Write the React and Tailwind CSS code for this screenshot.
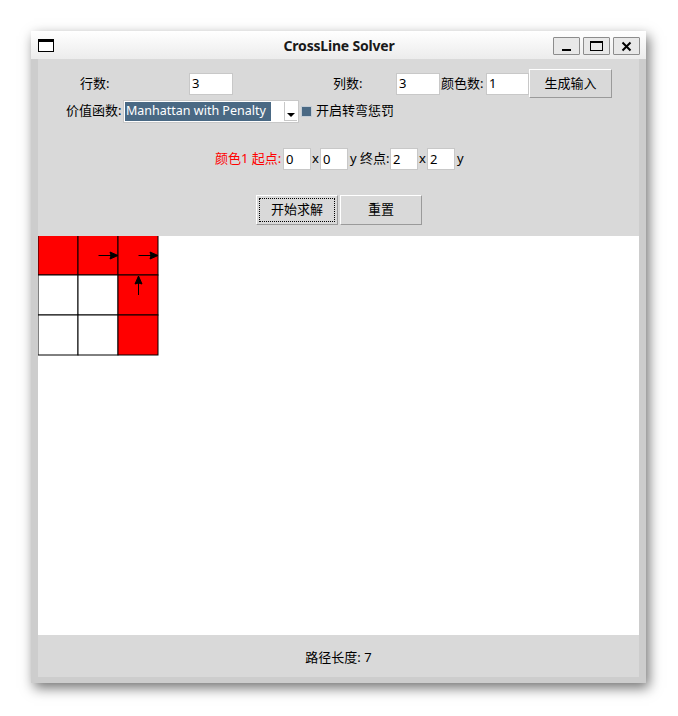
import React from 'react';

const font = { fontFamily: '"Noto Sans", "Noto Sans CJK SC", sans-serif' };

const Entry = ({ value, w }) => (
  <div
    className={`${w} h-[22px] bg-white border border-[#c8c8c8] flex items-center pl-[2px] text-[13px] text-black leading-none`}
  >
    {value}
  </div>
);

const TkButton = ({ children, focus }) => (
  <button
    className={`w-[82px] h-[30px] bg-[#d9d9d9] border border-t-white border-l-white border-b-[#9a9a9a] border-r-[#9a9a9a] text-[13px] text-black flex items-center justify-center p-[2px]`}
  >
    <span
      className={`w-full h-full flex items-center justify-center ${
        focus ? 'border border-dotted border-black' : ''
      }`}
    >
      {children}
    </span>
  </button>
);

const TitleButton = ({ children }) => (
  <div className="w-[27px] h-[18px] bg-[#e8e8e8] border border-[#8c8c8c] rounded-[1px] flex items-center justify-center">
    {children}
  </div>
);

// path cells that are painted red
const filled = [
  [0, 0],
  [0, 1],
  [0, 2],
  [1, 2],
  [2, 2],
];

const Grid = () => (
  <svg width="122" height="121" viewBox="0 0 122 121" className="block">
    {[0, 1, 2].map((r) =>
      [0, 1, 2].map((c) => {
        const red = filled.some(([fr, fc]) => fr === r && fc === c);
        return (
          <rect
            key={`${r}-${c}`}
            x={c * 40}
            y={r * 40 - 1}
            width="40"
            height="40"
            fill={red ? '#ff0000' : '#ffffff'}
            stroke="#000"
            strokeWidth="1"
          />
        );
      })
    )}
    {/* arrows */}
    <g stroke="#000" strokeWidth="1" fill="#000">
      <line x1="60.5" y1="19.5" x2="78" y2="19.5" />
      <polygon points="80,19.5 72,16 73,19.5 72,23" />
      <line x1="100.5" y1="19.5" x2="118" y2="19.5" />
      <polygon points="120,19.5 112,16 113,19.5 112,23" />
      <line x1="100.5" y1="59" x2="100.5" y2="42" />
      <polygon points="100.5,40 97,48 100.5,47 104,48" />
    </g>
  </svg>
);

export default function App() {
  return (
    <div className="w-[678px] h-[716px] bg-white pt-[31px] pl-[31px]" style={font}>
      <div className="w-[615px] flex flex-col shadow-[3px_5px_12px_rgba(0,0,0,0.55)]">
        {/* title bar */}
        <div className="h-[28px] bg-gradient-to-b from-white to-[#ececec] flex items-center pl-[7px] pr-[6px]">
          <div className="w-[93px]">
            <div className="w-[16px] h-[13px] border border-black border-t-[3px] bg-white" />
          </div>
          <div className="flex-1 text-center text-[14px] font-bold text-[#1a1a1a] tracking-[-0.2px] pt-[1px]">
            CrossLine Solver
          </div>
          <div className="w-[93px] flex justify-end gap-[3px] mt-[2px]">
            <TitleButton>
              <div className="w-[9px] h-[2px] bg-black mt-[8px]" />
            </TitleButton>
            <TitleButton>
              <div className="w-[13px] h-[10px] border border-black border-t-2" />
            </TitleButton>
            <TitleButton>
              <svg width="11" height="11" viewBox="0 0 11 11">
                <path d="M1.5 1.5 L9.5 9.5 M9.5 1.5 L1.5 9.5" stroke="#000" strokeWidth="2" />
              </svg>
            </TitleButton>
          </div>
        </div>

        {/* body frame */}
        <div className="bg-[#cdcdcd] pl-[7px] pr-[7px] pb-[6px]">
          <div className="w-[601px] bg-[#d9d9d9] flex flex-col text-[13px] text-black">
            {/* form */}
            <div className="h-[177px] flex flex-col">
              {/* row 1 */}
              <div className="flex items-center h-[29px] mt-[10px] pl-[42px]">
                <span className="w-[109px]">行数:</span>
                <Entry value="3" w="w-[44px]" />
                <span className="ml-[100px] w-[63px]">列数:</span>
                <Entry value="3" w="w-[44px]" />
                <span className="w-[46px] pl-[1px]">颜色数:</span>
                <Entry value="1" w="w-[43px]" />
                <button className="w-[83px] h-[29px] bg-[#d9d9d9] border border-t-white border-l-white border-b-[#9a9a9a] border-r-[#9a9a9a] text-[13px]">
                  生成输入
                </button>
              </div>

              {/* row 2 */}
              <div className="flex items-center h-[24px] mt-[1px] pl-[28px]">
                <span className="w-[57px]">价值函数:</span>
                <div className="w-[176px] h-[23px] bg-white border border-[#c8c8c8] flex items-center p-[1px]">
                  <div className="w-[146px] h-full bg-[#4a6984] text-white text-[12.5px] flex items-center pl-[1px] whitespace-nowrap overflow-hidden">
                    Manhattan with Penalty
                  </div>
                  <div className="flex-1" />
                  <div className="w-[13px] h-full border-l border-b border-[#c8c8c8] flex items-end justify-center pb-[2px]">
                    <svg width="8" height="5" viewBox="0 0 8 5">
                      <path d="M0 0 H8 L4 4 Z" fill="#000" />
                    </svg>
                  </div>
                </div>
                <div className="ml-[2px] w-[11px] h-[11px] bg-[#4a6984] border border-[#c4cdd6]" />
                <span className="ml-[4px]">开启转弯惩罚</span>
              </div>

              {/* row 3 */}
              <div className="flex items-center h-[22px] mt-[25px] pl-[177px]">
                <span className="w-[68px] text-[#ff0000]">颜色1 起点:</span>
                <Entry value="0" w="w-[28px]" />
                <span className="w-[9px] pl-[1px]">x</span>
                <Entry value="0" w="w-[28px]" />
                <span className="w-[42px] pl-[2px]">y 终点:</span>
                <Entry value="2" w="w-[28px]" />
                <span className="w-[9px] pl-[1px]">x</span>
                <Entry value="2" w="w-[28px]" />
                <span className="pl-[2px]">y</span>
              </div>

              {/* row 4 */}
              <div className="flex items-center gap-[2px] mt-[25px] pl-[218px]">
                <TkButton focus>开始求解</TkButton>
                <TkButton>重置</TkButton>
              </div>
            </div>

            {/* canvas */}
            <div className="h-[399px] bg-white overflow-hidden">
              <Grid />
            </div>

            {/* status */}
            <div className="h-[42px] flex items-center justify-center pt-[3px]">
              路径长度: 7
            </div>
          </div>
        </div>
      </div>
    </div>
  );
}
